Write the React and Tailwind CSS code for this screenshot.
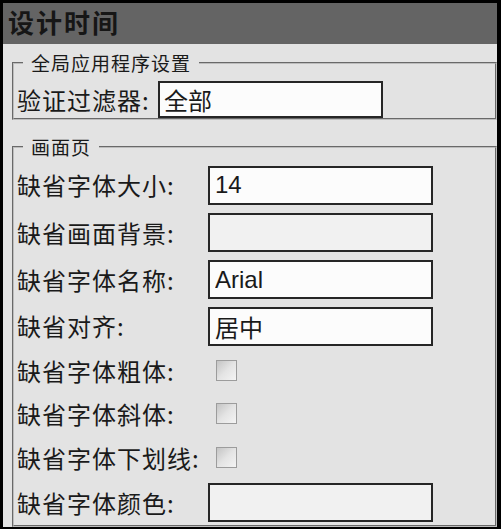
import React from 'react';

const cjk = '[font-family:"Noto_Sans_CJK_SC",sans-serif]';

const TextRow = ({ label, value, h, muted, latin }) => (
  <div className={`flex items-center ${h}`}>
    <span className={`w-[191px] shrink-0 text-[24px] leading-none tracking-[1px] text-[#1a1a1a] ${cjk}`}>{label}</span>
    <input
      readOnly
      value={value}
      className={`w-[225px] h-[39px] border-2 border-[#262626] pl-[5px] text-[24px] leading-none text-[#1a1a1a] outline-none ${
        muted ? 'bg-[#f1f1f1]' : 'bg-[#fcfcfc]'
      } ${latin ? '[font-family:"Liberation_Sans",Arial,sans-serif]' : cjk}`}
    />
  </div>
);

const CheckRow = ({ label, h }) => (
  <div className={`flex items-center ${h}`}>
    <span className={`w-[199px] shrink-0 text-[24px] leading-none tracking-[1px] text-[#1a1a1a] ${cjk}`}>{label}</span>
    <div className="w-[21px] h-[21px] border border-[#9c9c9c] bg-linear-to-br from-[#c4c4c4] via-[#e4e4e4] to-[#f4f4f4]" />
  </div>
);

const App = () => {
  return (
    <div className="w-[501px] h-[529px] bg-black pl-[3px] pt-[3px] pr-[4px] pb-[2px]">
      <div className="w-full h-full bg-[#e3e3e3] flex flex-col overflow-hidden">
        <div className="h-[41px] shrink-0 bg-[#646464] pl-[5px] pt-[3px]">
          <span className={`text-[26px] font-bold leading-8 tracking-[2px] text-[#161616] ${cjk}`}>设计时间</span>
        </div>

        <fieldset className="ml-[9px] mt-[9px] border-2 [border-style:groove] border-[#bdbdbd] pl-[3px] pt-[8px] pb-0">
          <legend className={`ml-[6px] px-2 text-[19px] leading-5 tracking-[1px] text-[#1a1a1a] ${cjk}`}>全局应用程序设置</legend>
          <div className="flex items-center h-[37px]">
            <span className={`w-[141px] shrink-0 text-[24px] leading-none tracking-[1px] text-[#1a1a1a] ${cjk}`}>验证过滤器:</span>
            <input
              readOnly
              value="全部"
              className={`w-[225px] h-[37px] border-2 border-[#262626] bg-[#fcfcfc] pl-[4px] text-[24px] leading-none text-[#1a1a1a] outline-none ${cjk}`}
            />
          </div>
        </fieldset>

        <fieldset className="ml-[9px] mt-[17px] border-2 [border-style:groove] border-[#bdbdbd] pl-[3px] pt-[4px] pb-0">
          <legend className={`ml-[6px] px-2 text-[19px] leading-5 tracking-[1px] text-[#1a1a1a] ${cjk}`}>画面页</legend>
          <TextRow label="缺省字体大小:" value="14" h="h-12" latin />
          <TextRow label="缺省画面背景:" value="" h="h-[47px]" muted />
          <TextRow label="缺省字体名称:" value="Arial" h="h-[47px]" latin />
          <TextRow label="缺省对齐:" value="居中" h="h-[46px]" />
          <CheckRow label="缺省字体粗体:" h="h-[43px]" />
          <CheckRow label="缺省字体斜体:" h="h-[43px]" />
          <CheckRow label="缺省字体下划线:" h="h-[45px]" />
          <TextRow label="缺省字体颜色:" value="" h="h-[45px]" muted />
        </fieldset>
      </div>
    </div>
  );
};

export default App;
